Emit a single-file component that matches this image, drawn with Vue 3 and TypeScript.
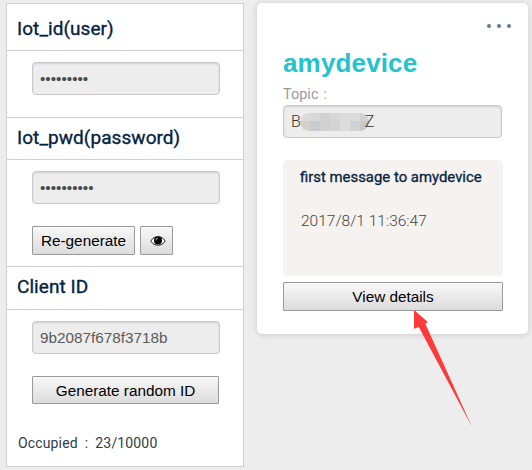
<script setup lang="ts">
const clientId: string = '9b2087f678f3718b'
const userMask: string = '•'.repeat(9)
const passwordMask: string = '•'.repeat(10)
const tiles: string[] = [
  '#dedad8', '#d6d8da', '#d0d1d3', '#d8d8d6', '#d8dcde', '#dddbda', '#d2d0ce',
  '#d4d0ce', '#c8ccd0', '#d0d1d3', '#d3d3d4', '#dddcdb', '#d0d3d6', '#c9c8c6',
]
</script>

<template>
  <main class="page">
    <section class="panel">
      <h2 class="head first">Iot_id(user)</h2>
      <div class="body user">
        <div class="field mask">{{ userMask }}</div>
      </div>
      <h2 class="head">Iot_pwd(password)</h2>
      <div class="body password">
        <div class="field mask">{{ passwordMask }}</div>
        <div class="actions">
          <button class="btn regen">Re-generate</button>
          <button class="btn eye" aria-label="Show password">
            <svg width="16" height="12" viewBox="0 0 16 12">
              <path d="M.8 6C4 .2 12 .2 15.2 6 12 11.6 4 11.6.8 6Z" fill="#fff" stroke="#222" stroke-width="1" />
              <circle cx="8" cy="5.6" r="4" fill="#000" />
              <path d="M5.9 5.4A2.3 2.3 0 0 1 8 3.2" fill="none" stroke="#ddd" stroke-width=".8" />
            </svg>
          </button>
        </div>
      </div>
      <h2 class="head third">Client ID</h2>
      <div class="body client">
        <div class="field">{{ clientId }}</div>
        <button class="btn random">Generate random ID</button>
      </div>
      <p class="occupied"><span>Occupied</span><span class="colon">:</span><span>23/10000</span></p>
    </section>

    <section class="card">
      <div class="more"><i></i><i></i><i></i></div>
      <h1 class="device">amydevice</h1>
      <div class="label"><span>Topic</span><span class="colon">:</span></div>
      <div class="field topic">
        <span>B</span>
        <span class="mosaic"><i v-for="(c, n) in tiles" :key="n" :style="{ background: c }"></i></span>
        <span class="tail">Z</span>
      </div>
      <div class="message">
        <p class="subject">first message to amydevice</p>
        <p class="time">2017/8/1 11:36:47</p>
      </div>
      <button class="btn details">View details</button>
    </section>

    <svg class="arrow" width="60" height="118" viewBox="0 0 60 118">
      <path d="M1 0 14.8 12 12.3 13.8 58.8 116.5 5.8 16.9 1 18.8Z" fill="#fc3a3a" />
    </svg>
  </main>
</template>

<style>
body {
  background: #ededed;
}
</style>

<style scoped>
* {
  box-sizing: border-box;
}
h1, h2, p {
  margin: 0;
  font-weight: 400;
}
.page {
  position: relative;
  width: 532px;
  height: 470px;
  padding: 3px 4px 3px 6px;
  display: flex;
  align-items: flex-start;
  gap: 13px;
  overflow: hidden;
  background: #ededed;
  font-family: Roboto, "Liberation Sans", sans-serif;
  white-space: nowrap;
}
.panel {
  width: 238px;
  height: 464px;
  border: 1px solid #d0d0d0;
  background: #fff;
}
.head {
  height: 42px;
  padding-left: 10px;
  border-bottom: 1px solid #d0d0d0;
  font-size: 19px;
  line-height: 40px;
  letter-spacing: 0.06px;
  color: #05233f;
  -webkit-text-stroke: 0.35px #05233f;
}
.head.first {
  height: 47px;
  padding-top: 5px;
}
.head.third {
  height: 43px;
}
.body {
  padding: 11px 0 0 25px;
}
.user {
  height: 67px;
  border-bottom: 1px solid #d0d0d0;
}
.password {
  height: 107px;
  border-bottom: 1px solid #d0d0d0;
}
.client {
  height: 122px;
}
.field {
  width: 188px;
  height: 33px;
  padding: 0 7px;
  border: 1px solid #c9c9c9;
  border-radius: 4px;
  background: #ededed;
  box-shadow: inset 0 1px 2px rgba(0, 0, 0, 0.12);
  font: 15.3px/31px "Liberation Sans", sans-serif;
  color: #5b5b5b;
}
.mask {
  color: #4b4b4b;
}
.actions {
  display: flex;
  gap: 5px;
  margin-top: 22px;
}
.btn {
  display: flex;
  align-items: center;
  justify-content: center;
  height: 29px;
  padding: 0;
  border: 1px solid #9a9a9a;
  border-radius: 1px;
  background: linear-gradient(#f8f8f8, #dcdcdc);
  font: 15.3px/27px "Liberation Sans", sans-serif;
  color: #000;
}
.regen {
  width: 103px;
}
.eye {
  width: 33px;
  padding-left: 3px;
}
.random {
  width: 187px;
  height: 28px;
  margin-top: 22px;
}
.occupied {
  display: flex;
  padding-left: 11px;
  font-size: 14px;
  line-height: 22px;
  letter-spacing: 0.15px;
  color: #303c48;
}
.occupied .colon {
  margin: 0 7px 0 7px;
}
.card {
  width: 271px;
  height: 331px;
  padding: 21px 17px 0 26px;
  border-radius: 5px;
  background: #fff;
  box-shadow: 0 1px 6px rgba(0, 0, 0, 0.14);
}
.more {
  display: flex;
  justify-content: flex-end;
  gap: 6px;
  height: 4px;
}
.more i {
  width: 4px;
  height: 4px;
  border-radius: 50%;
  background: #5e7e95;
}
.device {
  margin-top: 17px;
  font: 700 26px/36px "Liberation Sans", sans-serif;
  letter-spacing: 0.15px;
  color: #25c2cd;
}
.label {
  display: flex;
  height: 24px;
  font-size: 14.5px;
  line-height: 27px;
  color: #999;
}
.label .colon {
  margin-left: 5px;
}
.topic {
  display: flex;
  align-items: center;
  width: 219px;
  font: 300 16px/31px Roboto, sans-serif;
  color: #333;
}
.mosaic {
  display: grid;
  grid-template-columns: repeat(7, 10px);
  grid-template-rows: 8px 10px;
  width: 69px;
  height: 18px;
  margin-left: -1px;
  border-radius: 9px;
  overflow: hidden;
}
.tail {
  margin-left: -4px;
}
.message {
  width: 220px;
  height: 116px;
  margin: 22px 0 6px;
  padding: 5px 0 0 17px;
  border-radius: 5px;
  background: #f5f2ef;
}
.subject {
  font-size: 14.9px;
  line-height: 24px;
  color: #05233f;
  -webkit-text-stroke: 0.3px #05233f;
}
.time {
  margin-top: 20px;
  padding-left: 1px;
  font-size: 15.5px;
  font-weight: 300;
  line-height: 24px;
  color: #444;
}
.details {
  width: 220px;
}
.arrow {
  position: absolute;
  left: 413px;
  top: 310px;
}
</style>
